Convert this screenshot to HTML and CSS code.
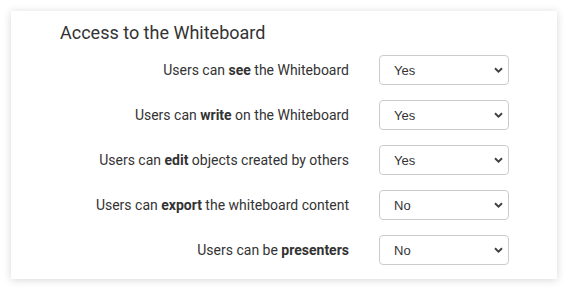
FILE: index.html
```html
<!DOCTYPE html>
<html lang="en">
<head>
<meta charset="utf-8">
<title>Access to the Whiteboard</title>
<link rel="stylesheet" href="styles.css">
</head>
<body>
<section class="card">
  <h2 class="title">Access to the Whiteboard</h2>
  <div class="form">
    <label class="label" for="s1">Users can <b>see</b> the Whiteboard</label>
    <select class="select" id="s1"><option>Yes</option><option>No</option></select>
    <label class="label" for="s2">Users can <b>write</b> on the Whiteboard</label>
    <select class="select" id="s2"><option>Yes</option><option>No</option></select>
    <label class="label" for="s3">Users can <b>edit</b> objects created by others</label>
    <select class="select" id="s3"><option>Yes</option><option>No</option></select>
    <label class="label" for="s4">Users can <b>export</b> the whiteboard content</label>
    <select class="select" id="s4"><option>No</option><option>Yes</option></select>
    <label class="label" for="s5">Users can be <b>presenters</b></label>
    <select class="select" id="s5"><option>No</option><option>Yes</option></select>
  </div>
</section>
</body>
</html>
```
FILE: styles.css
```css
html, body {
  margin: 0;
  padding: 0;
  background: #ffffff;
}
body {
  padding: 11px 13px 13px 11px;
  font-family: Roboto, "Liberation Sans", sans-serif;
  color: #333333;
}
.card {
  width: 546px;
  box-sizing: border-box;
  padding: 10px 48px 14px 49px;
  background: #ffffff;
  box-shadow: 0 1px 8px rgba(0, 0, 0, 0.16);
}
.title {
  margin: 0 0 10px 0;
  font-size: 18px;
  line-height: 24px;
  font-weight: 400;
  color: #333333;
}
.form {
  display: grid;
  grid-template-columns: 289px 130px;
  column-gap: 30px;
  row-gap: 15px;
  align-items: center;
}
.label {
  text-align: right;
  font-size: 14px;
  line-height: 20px;
  color: #333333;
}
.label b {
  font-weight: 700;
}
.select {
  appearance: none;
  -webkit-appearance: none;
  width: 130px;
  height: 30px;
  box-sizing: border-box;
  margin: 0;
  padding: 0 24px 0 14px;
  border: 1px solid #cccccc;
  border-radius: 4px;
  background-color: #ffffff;
  background-image: url("data:image/svg+xml,%3Csvg xmlns='http://www.w3.org/2000/svg' width='9' height='6' viewBox='0 0 9 6'%3E%3Cpath d='M1 1.2 L4.5 4.6 L8 1.2' fill='none' stroke='%23404040' stroke-width='1.9'/%3E%3C/svg%3E");
  background-repeat: no-repeat;
  background-position: right 5px center;
  background-size: 9px 6px;
  font-family: "Liberation Sans", Arial, sans-serif;
  font-size: 13px;
  color: #333333;
}
```
